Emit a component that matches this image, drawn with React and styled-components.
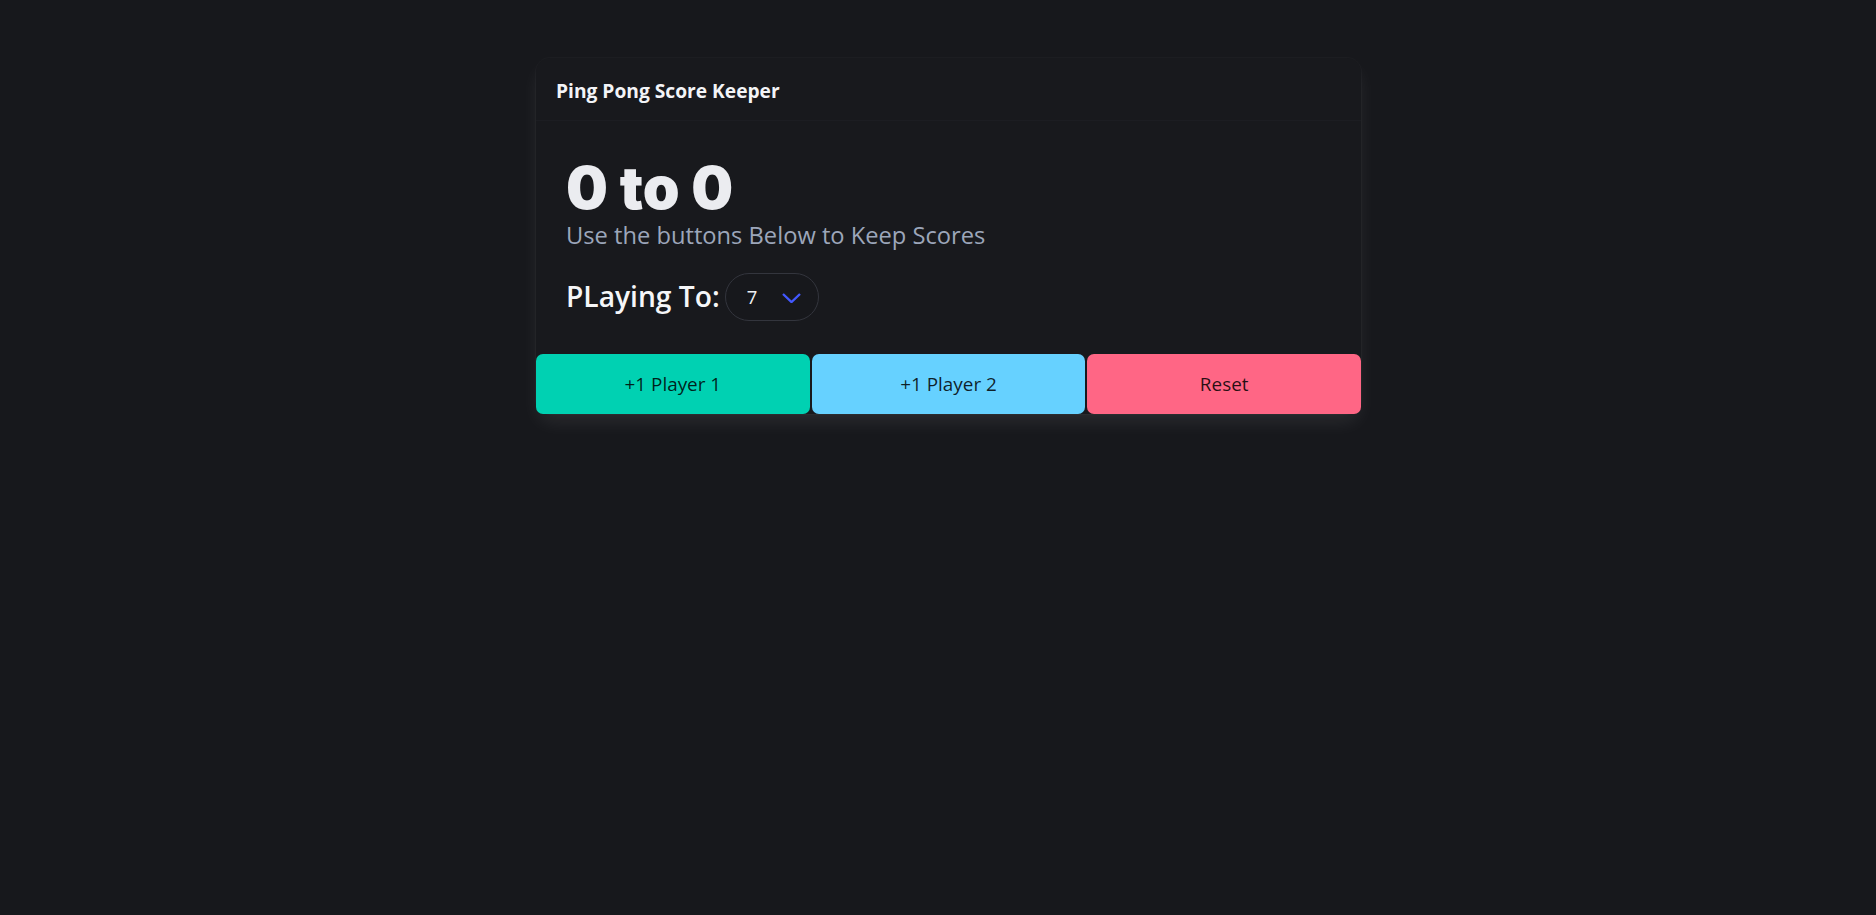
import React, { useState } from "react";
import styled, { createGlobalStyle } from "styled-components";

const GlobalStyle = createGlobalStyle`
  html, body {
    margin: 0;
    padding: 0;
    background: #17181c;
  }
  body {
    font-family: "Open Sans", "Noto Sans", "Liberation Sans", sans-serif;
    color: #f0f1f4;
  }
  * {
    box-sizing: border-box;
  }
`;

const Page = styled.div`
  min-height: 915px;
  padding: 58px 0 0 536px;
`;

const Card = styled.div`
  width: 825px;
  background: #18191d;
  border-radius: 14px;
  box-shadow: 0 10px 20px -3px rgba(255, 255, 255, 0.09), 0 0 0 1px rgba(255, 255, 255, 0.025);
`;

const CardHeader = styled.header`
  height: 63px;
  display: flex;
  align-items: center;
  padding: 2px 20px 0;
  border-bottom: 1px solid #1c1d22;
`;

const HeaderTitle = styled.p`
  margin: 0;
  font-size: 19.2px;
  font-weight: 700;
  color: #f3f4f7;
`;

const CardContent = styled.div`
  padding: 35px 30px 33px;
`;

const Score = styled.h1`
  margin: 0;
  font-family: Inter, "Noto Sans", sans-serif;
  font-size: 59px;
  font-weight: 900;
  line-height: 1.1;
  color: #ebecf0;
`;

const Subtitle = styled.p`
  margin: 0;
  font-size: 23.7px;
  line-height: 28px;
  color: #9ca6ba;
`;

const PlayRow = styled.div`
  display: flex;
  align-items: center;
  gap: 5px;
  margin-top: 24px;
`;

const PlayLabel = styled.h3`
  margin: 0;
  font-size: 28.2px;
  font-weight: 600;
  line-height: 1.2;
  color: #f5f6f8;
`;

const SelectWrap = styled.span`
  position: relative;
  display: inline-flex;
`;

const Select = styled.select`
  appearance: none;
  width: 94px;
  height: 48px;
  padding: 0 0 0 21px;
  border: 1px solid #33353d;
  border-radius: 999px;
  background: #17181c;
  color: #f0f1f4;
  font-family: "Open Sans", "Noto Sans", sans-serif;
  font-size: 18.5px;
  outline: none;
`;

const Chevron = styled.svg`
  position: absolute;
  right: 18px;
  top: 20px;
  pointer-events: none;
`;

const Footer = styled.footer`
  display: flex;
  gap: 2px;
`;

const ScoreButton = styled.button`
  flex: 1;
  height: 60px;
  border: none;
  border-radius: 7px;
  background: ${(p) => p.bg};
  color: rgba(0, 0, 0, 0.85);
  font-family: "Open Sans", "Noto Sans", sans-serif;
  font-size: 18.9px;
  font-weight: 500;
  cursor: pointer;
`;

export default function App() {
  const [p1, setP1] = useState(0);
  const [p2, setP2] = useState(0);
  const [target, setTarget] = useState("7");

  return (
    <>
      <GlobalStyle />
      <Page>
        <Card>
          <CardHeader>
            <HeaderTitle>Ping Pong Score Keeper</HeaderTitle>
          </CardHeader>
          <CardContent>
            <Score>{p1} to {p2}</Score>
            <Subtitle>Use the buttons Below to Keep Scores</Subtitle>
            <PlayRow>
              <PlayLabel>PLaying To:</PlayLabel>
              <SelectWrap>
                <Select value={target} onChange={(e) => setTarget(e.target.value)}>
                  {[3, 4, 5, 6, 7, 8, 9, 10, 11].map((n) => (
                    <option key={n} value={n}>{n}</option>
                  ))}
                </Select>
                <Chevron width="19" height="10" viewBox="0 0 19 10">
                  <polyline points="1,1 9.5,9 18,1" fill="none" stroke="#4258ff" strokeWidth="2.4" />
                </Chevron>
              </SelectWrap>
            </PlayRow>
          </CardContent>
          <Footer>
            <ScoreButton bg="#00d1b2" onClick={() => setP1(p1 + 1)}>+1 Player 1</ScoreButton>
            <ScoreButton bg="#66d1ff" onClick={() => setP2(p2 + 1)}>+1 Player 2</ScoreButton>
            <ScoreButton bg="#ff6685" onClick={() => { setP1(0); setP2(0); }}>Reset</ScoreButton>
          </Footer>
        </Card>
      </Page>
    </>
  );
}
